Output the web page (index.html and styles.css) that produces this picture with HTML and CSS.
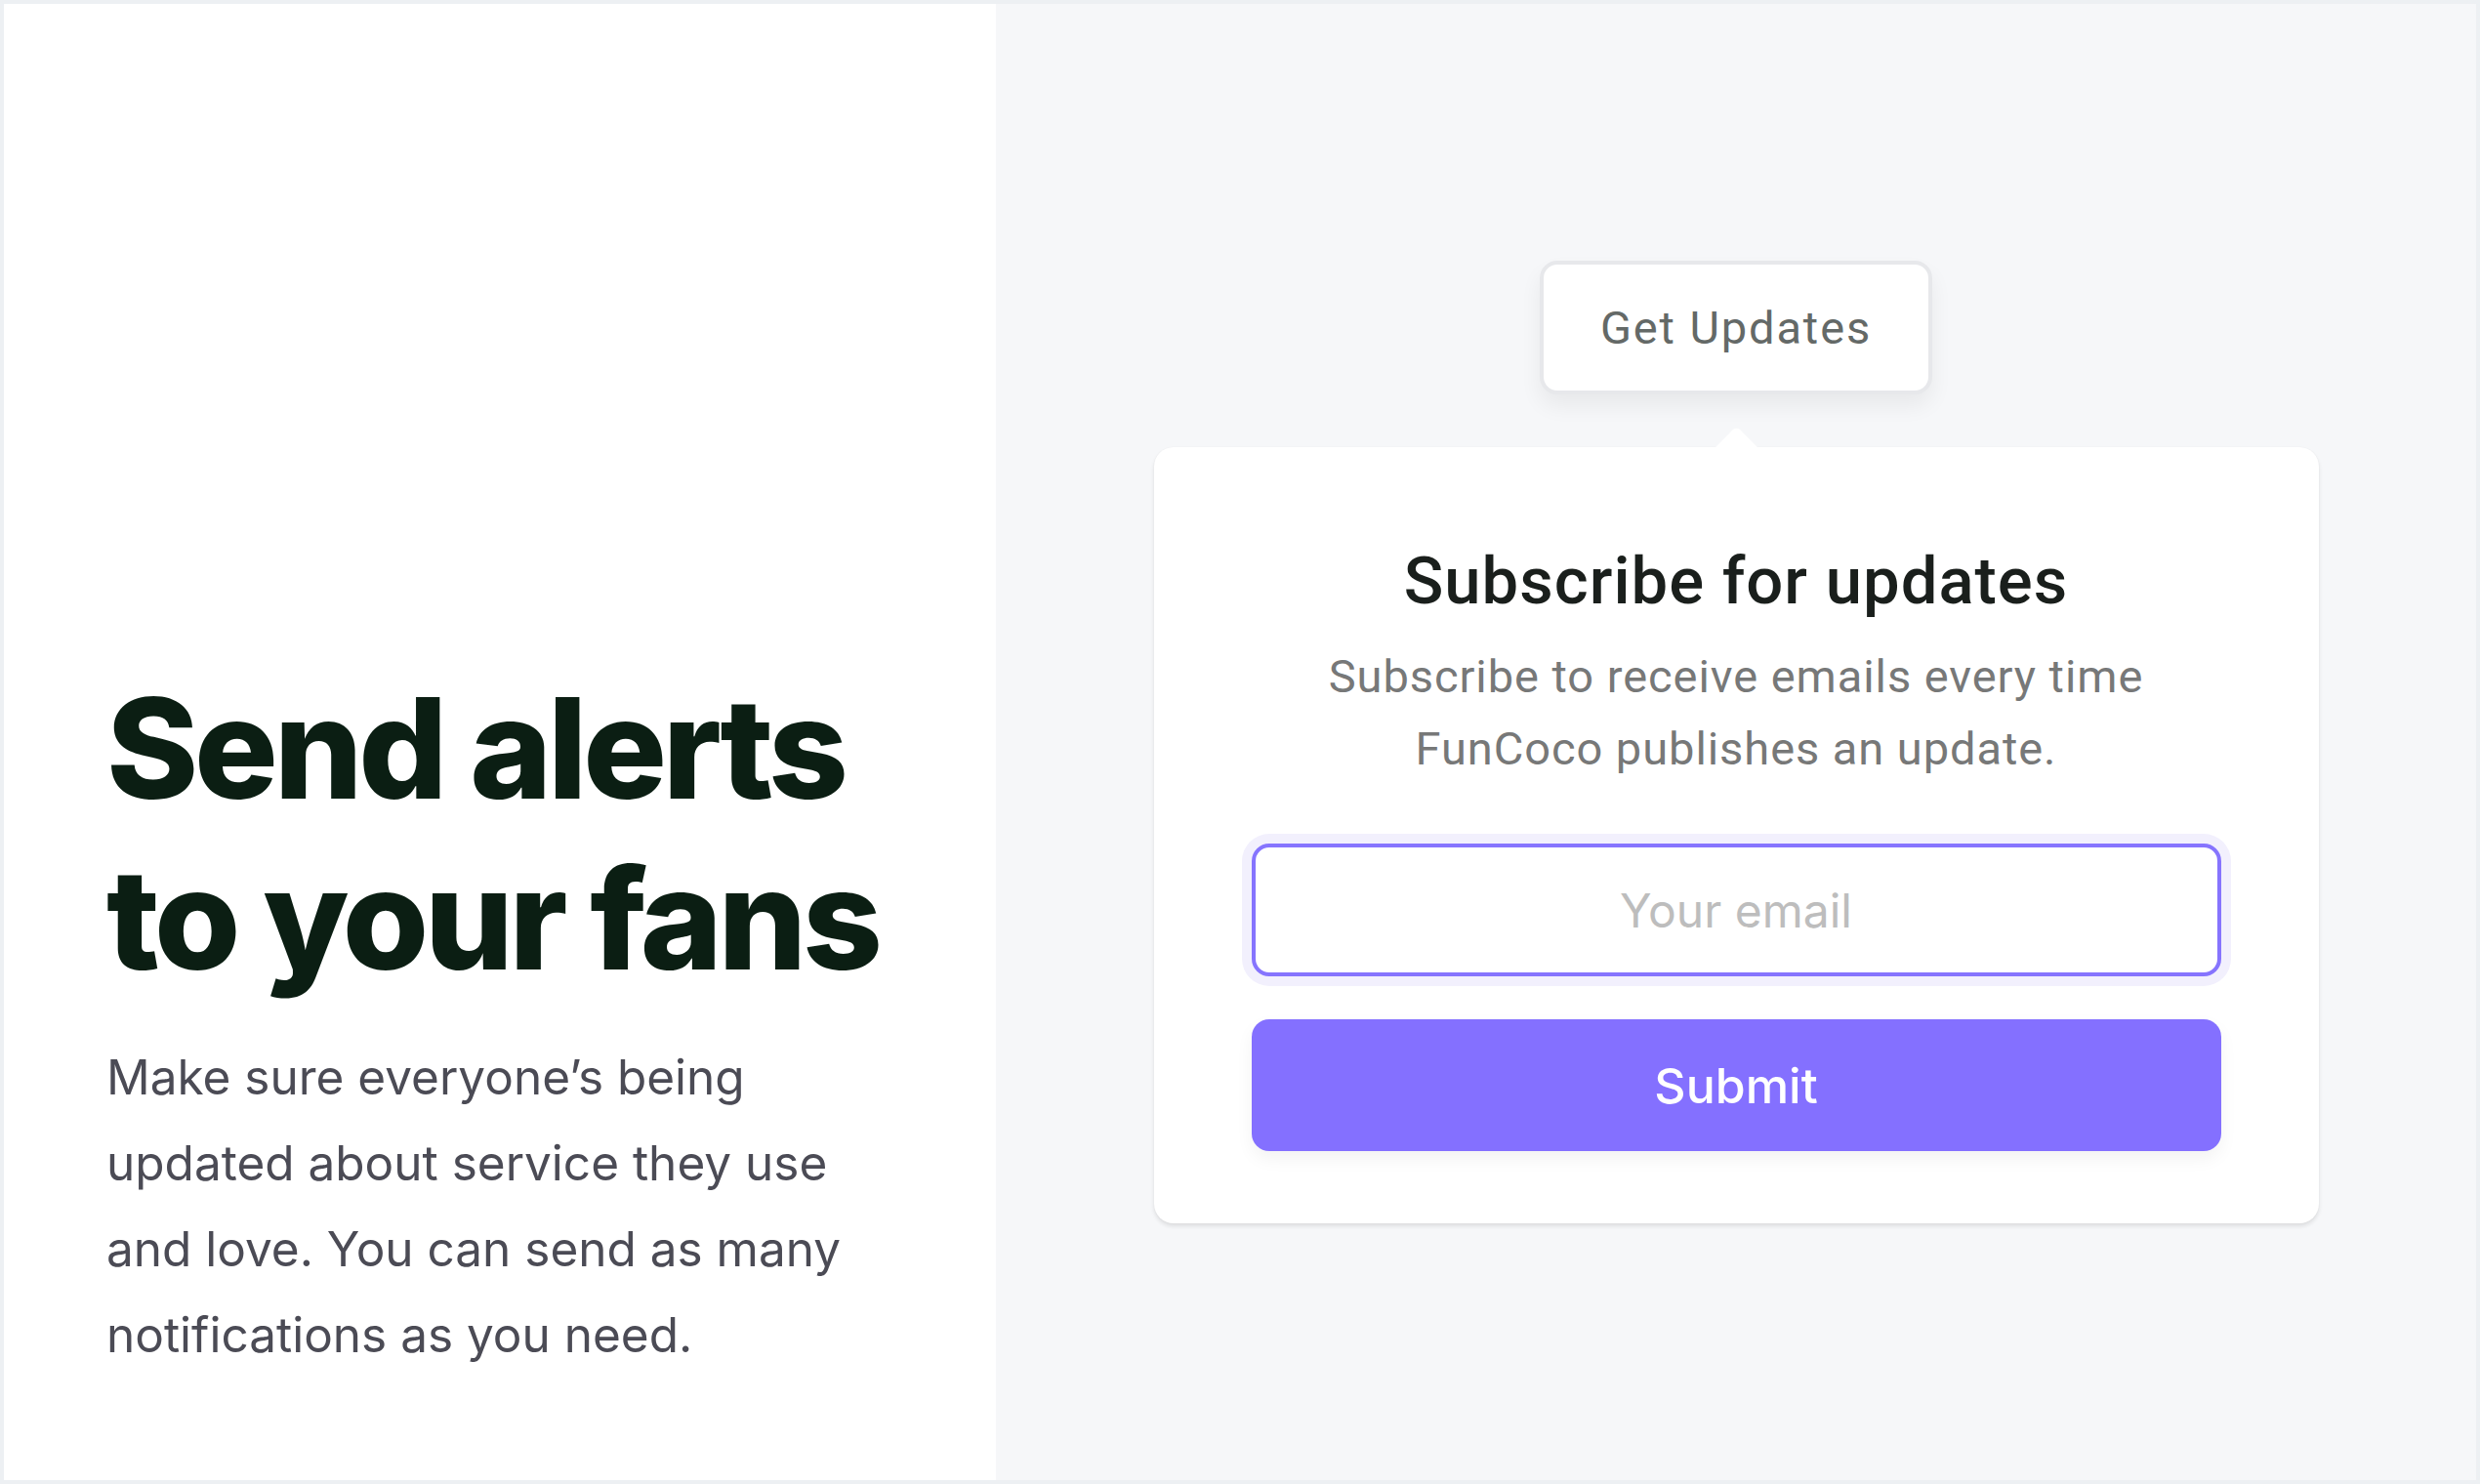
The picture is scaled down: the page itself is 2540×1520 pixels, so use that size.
FILE: index.html
```html
<!DOCTYPE html>
<html lang="en">
<head>
<meta charset="utf-8">
<title>Send alerts to your fans</title>
<link rel="stylesheet" href="styles.css">
</head>
<body>
<div class="frame">
  <section class="intro">
    <h1 class="headline">Send alerts<br>to your fans</h1>
    <p class="lead">Make sure everyone’s being updated about service they use and love. You can send as many notifications as you need.</p>
  </section>
  <section class="stage">
    <button class="trigger" type="button">Get Updates</button>
    <div class="card">
      <h2 class="card-title">Subscribe for updates</h2>
      <p class="card-text">Subscribe to receive emails every time<br>FunCoco publishes an update.</p>
      <form class="card-form">
        <input class="email" type="email" placeholder="Your email">
        <button class="submit" type="button">Submit</button>
      </form>
    </div>
  </section>
</div>
</body>
</html>
```

FILE: styles.css
```css
* { box-sizing: border-box; }

html, body {
  margin: 0;
  padding: 0;
  background: #edf0f3;
}

.frame {
  width: 2540px;
  height: 1520px;
  padding: 4px;
  display: grid;
  grid-template-columns: 1016px 1fr;
}

.intro {
  background: #ffffff;
  display: flex;
  flex-direction: column;
  justify-content: flex-end;
  padding: 0 100px 105px 105px;
}

.headline {
  margin: 0;
  font-family: "Inter", "Liberation Sans", sans-serif;
  font-weight: 800;
  font-size: 143px;
  line-height: 175px;
  letter-spacing: -0.03em;
  color: #0b1e13;
}

.lead {
  margin: 31px 0 0;
  max-width: 800px;
  font-family: "Inter", "Liberation Sans", sans-serif;
  font-weight: 400;
  font-size: 49.5px;
  line-height: 88px;
  letter-spacing: 0;
  color: #4b4b55;
}

.stage {
  background: #f6f7f9;
  display: flex;
  flex-direction: column;
  align-items: center;
  justify-content: center;
}

.trigger {
  width: 402px;
  height: 137px;
  border: 4px solid #e7e8eb;
  border-radius: 18px;
  background: #ffffff;
  box-shadow: 0 12px 22px rgba(0, 0, 0, 0.06);
  font-family: "Roboto", "Liberation Sans", sans-serif;
  font-size: 47px;
  font-weight: 400;
  color: #646967;
  padding: 0;
  letter-spacing: 0.04em;
}

.card {
  position: relative;
  margin-top: 54px;
  width: 1193px;
  background: #ffffff;
  border-radius: 20px;
  padding: 98px 100px 74px;
  box-shadow: 0 3px 4px rgba(0, 0, 0, 0.10), 0 0 2px rgba(0, 0, 0, 0.04);
  text-align: center;
}

.card::before {
  content: "";
  position: absolute;
  top: -15px;
  left: 50%;
  width: 31px;
  height: 31px;
  margin-left: -15px;
  background: #ffffff;
  border-radius: 5px 0 0 0;
  transform: rotate(45deg);
}

.card-title {
  margin: 0;
  font-family: "Roboto", "Liberation Sans", sans-serif;
  font-weight: 500;
  font-size: 67px;
  line-height: 79px;
  letter-spacing: 0.015em;
  color: #1a1f1c;
}

.card-text {
  margin: 21px 0 0;
  font-family: "Roboto", "Liberation Sans", sans-serif;
  font-weight: 400;
  font-size: 47px;
  line-height: 74px;
  letter-spacing: 0.02em;
  color: #777878;
}

.card-form {
  margin-top: 60px;
  display: flex;
  flex-direction: column;
  gap: 44px;
}

.email {
  width: 100%;
  height: 136px;
  border: 4px solid #8674fe;
  border-radius: 18px;
  box-shadow: 0 0 0 10px #f2f0fd;
  background: #ffffff;
  outline: none;
  text-align: center;
  font-family: "Inter", "Liberation Sans", sans-serif;
  font-size: 48px;
  color: #333333;
}

.email::placeholder {
  color: #bdbdbd;
}

.submit {
  width: 100%;
  height: 135px;
  border: none;
  border-radius: 18px;
  background: #8470ff;
  box-shadow: 0 8px 18px rgba(0, 0, 0, 0.05);
  color: #ffffff;
  font-family: "Inter", "Liberation Sans", sans-serif;
  font-weight: 500;
  font-size: 50px;
  padding: 0;
}
```
